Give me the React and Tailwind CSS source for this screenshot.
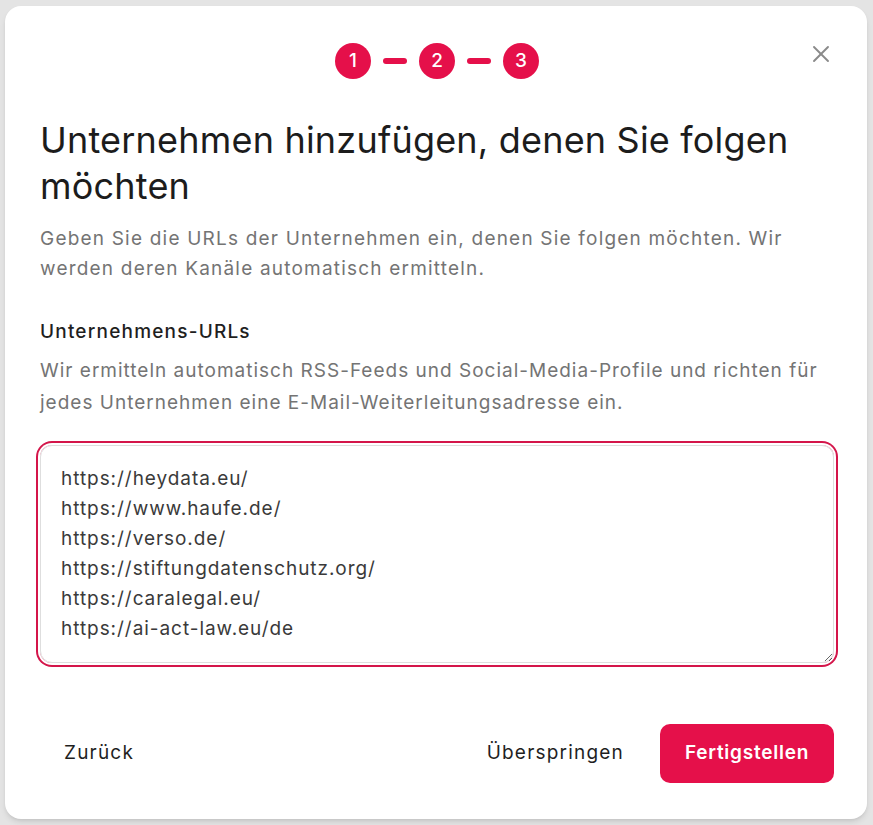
import { X } from "lucide-react";

const urls = [
  "https://heydata.eu/",
  "https://www.haufe.de/",
  "https://verso.de/",
  "https://stiftungdatenschutz.org/",
  "https://caralegal.eu/",
  "https://ai-act-law.eu/de",
].join("\n");

function Steps() {
  return (
    <div className="flex items-center justify-center gap-3">
      {[1, 2, 3].map((n) => (
        <div key={n} className="flex items-center gap-3">
          {n > 1 && <span className="h-[6px] w-6 rounded-full bg-[#e5104a]" />}
          <span className="flex h-9 w-9 items-center justify-center rounded-full bg-[#e5104a] text-[19px] font-medium text-white">
            {n}
          </span>
        </div>
      ))}
    </div>
  );
}

export default function App() {
  return (
    <div
      className="min-h-screen bg-[#e4e4e4] pt-[6px] pb-[6px] pl-[5px] pr-[6px]"
      style={{ fontFamily: "Inter, 'Noto Sans', sans-serif" }}
    >
      <div className="relative flex h-[813px] flex-col rounded-2xl bg-white pt-[37px] pb-[36px] pl-[35px] pr-[33px] shadow-md">
        {/* Close */}
        <button className="absolute right-[32px] top-[34px] text-[#8a8a8a]">
          <X className="h-7 w-7" strokeWidth={1.6} />
        </button>

        <Steps />

        <h1 className="mt-[38px] text-[36px] leading-[46px] font-normal tracking-[0.2px] text-[#1c1c1c]">
          Unternehmen hinzufügen, denen Sie folgen möchten
        </h1>
        <p className="mt-[15px] text-[19px] leading-[30px] tracking-[1.2px] text-[#747474]">
          Geben Sie die URLs der Unternehmen ein, denen Sie folgen möchten. Wir
          werden deren Kanäle automatisch ermitteln.
        </p>

        <label className="mt-[33px] text-[19px] leading-[30px] font-medium tracking-[1.2px] text-[#1f1f1f]">
          Unternehmens-URLs
        </label>
        <p className="mt-[8px] text-[19px] leading-[32px] tracking-[1px] text-[#747474]">
          Wir ermitteln automatisch RSS-Feeds und Social-Media-Profile und richten
          für jedes Unternehmen eine E-Mail-Weiterleitungsadresse ein.
        </p>

        <textarea
          autoFocus
          defaultValue={urls}
          className="mt-[26px] h-[218px] w-full rounded-xl border border-[#dedede] px-5 py-[18px] text-[19px] leading-[30px] tracking-[0.05em] text-[#3a3a3a] caret-[#222] outline-none ring-2 ring-[#d4154a] ring-offset-2"
        />

        <div className="mt-auto flex items-center justify-between">
          <button className="h-[59px] px-6 text-[19px] font-normal tracking-[1.2px] text-[#1f1f1f]">
            Zurück
          </button>
          <div className="flex items-center gap-[12px]">
            <button className="h-[59px] px-6 text-[19px] font-normal tracking-[1.2px] text-[#1f1f1f]">
              Überspringen
            </button>
            <button className="h-[59px] w-[174px] rounded-[10px] bg-[#e5104a] text-[19px] font-semibold tracking-[0.04em] text-white">
              Fertigstellen
            </button>
          </div>
        </div>
      </div>
    </div>
  );
}
